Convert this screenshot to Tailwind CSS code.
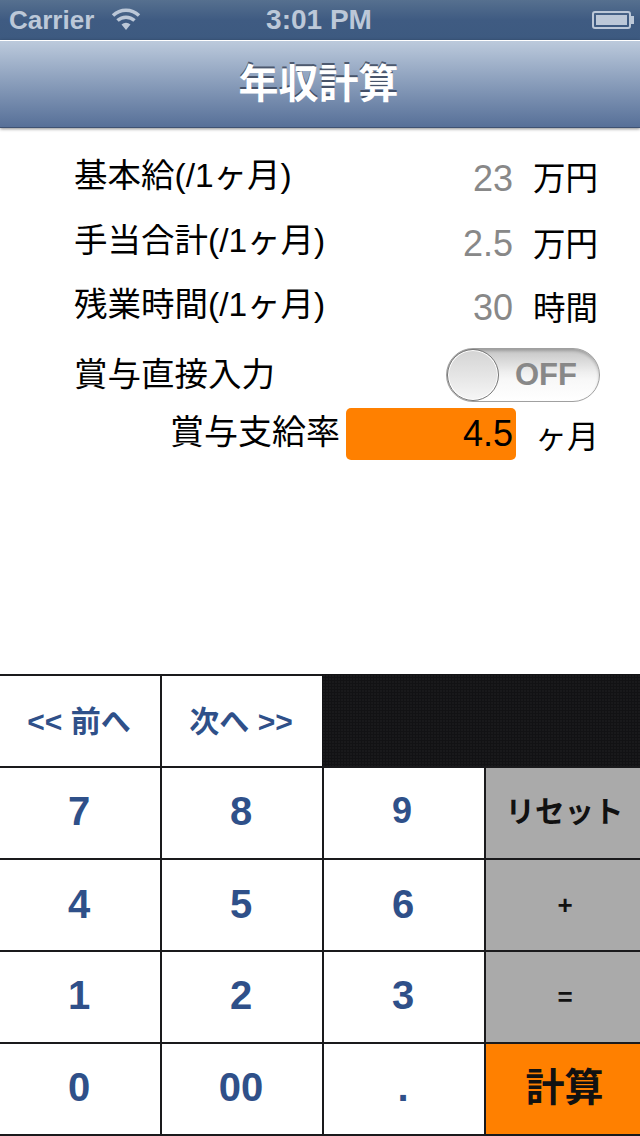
<!DOCTYPE html>
<html lang="ja">

<head>
  <meta charset="UTF-8">
  <meta name="viewport" content="width=device-width, initial-scale=1.0">
  <script src="https://cdn.jsdelivr.net/npm/@tailwindcss/browser@4"></script>
  <title>年収計算</title>
</head>

<body class="bg-white font-['Liberation_Sans','Noto_Sans_CJK_JP',sans-serif]">
  <div class="w-[640px] h-[1136px] flex flex-col overflow-hidden">
    <!-- status bar -->
    <div class="h-[40px] flex items-center px-[9px] bg-gradient-to-b from-[#56708f] via-[#3f5b82] to-[#3d5a80] text-[#bcc8d8] font-bold text-[26px]">
      <div class="w-[100px]">Carrier</div>
      <svg class="mt-[-3px]" width="34" height="24" viewBox="0 0 32 24">
        <path d="M16 23 L11.500 17.500 A7 7 0 0 1 20.500 17.500 Z" fill="#bcc8d8" />
        <path d="M7.500 13.500 A12.500 12.500 0 0 1 24.500 13.500" fill="none" stroke="#bcc8d8" stroke-width="3.500" />
        <path d="M3 8.500 A19 19 0 0 1 29 8.500" fill="none" stroke="#bcc8d8" stroke-width="3.500" />
      </svg>
      <div class="w-[106px] ml-[123px] text-center whitespace-nowrap text-[28px]">3:01 PM</div>
      <div class="ml-auto mr-[-3px] flex items-center">
        <div class="w-[39px] h-[18px] border-2 border-[#bcc8d8] rounded-[3px] p-[2px]">
          <div class="w-full h-full bg-[#bcc8d8]"></div>
        </div>
        <div class="w-[3px] h-[8px] bg-[#bcc8d8]"></div>
      </div>
    </div>
    <!-- nav bar -->
    <div class="h-[88px] border-t-[1px] border-white bg-gradient-to-b from-[#bccadc] to-[#577098] flex items-center justify-center shadow-[0_1px_3px_rgba(0,0,0,0.45)] border-b-[1px] border-b-[#3f5272] z-10">
      <h1 class="text-white font-bold text-[40px] mr-[3px] [text-shadow:0_-2px_0_rgba(40,50,70,0.7)]">年収計算</h1>
    </div>

    <!-- form -->
    <div class="flex-1 text-black text-[33.500px] pt-[25px]">
      <div class="h-[48px] flex items-center pl-[74px]">
        <div class="flex-1 -mt-[2px]">基本給(/1ヶ月)</div>
        <div class="text-[36px] text-[#888] mr-[20px] mt-[4px]">23</div>
        <div class="w-[66px] mr-[41px] mt-[4px] text-[32.500px] whitespace-nowrap">万円</div>
      </div>
      <div class="h-[48px] mt-[17px] flex items-center pl-[74px]">
        <div class="flex-1 -mt-[2px]">手当合計(/1ヶ月)</div>
        <div class="text-[36px] text-[#888] mr-[20px] mt-[4px]">2.5</div>
        <div class="w-[66px] mr-[41px] mt-[6px] text-[32.500px] whitespace-nowrap">万円</div>
      </div>
      <div class="h-[48px] mt-[16px] flex items-center pl-[74px]">
        <div class="flex-1 -mt-[2px]">残業時間(/1ヶ月)</div>
        <div class="text-[36px] text-[#888] mr-[20px] mt-[4px]">30</div>
        <div class="w-[66px] mr-[41px] mt-[6px] text-[32.500px] whitespace-nowrap">時間</div>
      </div>
      <div class="h-[54px] mt-[18px] flex items-center pl-[74px]">
        <div class="flex-1">賞与直接入力</div>
        <!-- switch -->
        <div class="relative w-[154px] h-[54px] mr-[40px] rounded-full border border-[#a0a0a0] bg-[linear-gradient(to_bottom,#c4c4c4,#efefef_45%,#f8f8f8_60%,#ffffff)] flex items-center justify-end pr-[22px] shadow-[inset_0_2px_3px_rgba(0,0,0,0.2)]">
          <span class="text-[#888] font-bold text-[31px]">OFF</span>
          <div class="absolute left-0 top-0 w-[52px] h-[52px] rounded-full border border-[#777] bg-gradient-to-b from-[#d4d4d4] to-[#f6f6f6] shadow-[inset_0_0_0_1px_#fff]"></div>
        </div>
      </div>
      <div class="h-[52px] mt-[6px] flex items-center">
        <div class="w-[340px] text-right whitespace-nowrap -mt-[4px] text-[34px]">賞与支給率</div>
        <div class="w-[170px] h-[52px] ml-[6px] bg-[#ff8000] rounded-[5px] flex items-center justify-end pr-[3px] text-[36px]">4.5</div>
        <div class="ml-[19px] mt-[6px] text-[32px] whitespace-nowrap">ヶ月</div>
      </div>
    </div>

    <!-- keypad -->
    <div class="grid grid-cols-[160px_160px_160px_154px] grid-rows-[90px_90px_90px_90px_90px] gap-[2px] py-[2px] bg-[#1a1a1c] text-[#2f5089] font-bold text-[40px]">
      <div class="bg-white flex items-center justify-center text-[30px] pr-[2px]">&lt;&lt; 前へ</div>
      <div class="bg-white flex items-center justify-center text-[30px] pr-[2px]">次へ &gt;&gt;</div>
      <div class="col-span-2 ml-[-2px] mt-[-2px] bg-[#19191b] bg-[linear-gradient(to_right,#121214_1px,transparent_1px),linear-gradient(to_bottom,#121214_1px,transparent_1px)] bg-[size:3px_3px]"></div>

      <div class="bg-white flex items-center justify-center pb-[4px] pr-[2px]">7</div>
      <div class="bg-white flex items-center justify-center pb-[4px] pr-[2px]">8</div>
      <div class="bg-white flex items-center justify-center pb-[4px] pr-[4px] text-[36px]">9</div>
      <div class="bg-[#aaa] flex items-center justify-center text-[#111] text-[29.500px] pb-[2px] pl-[3px]">リセット</div>

      <div class="bg-white flex items-center justify-center pb-[2px] pr-[2px]">4</div>
      <div class="bg-white flex items-center justify-center pb-[2px] pr-[2px]">5</div>
      <div class="bg-white flex items-center justify-center pb-[2px] pr-[2px]">6</div>
      <div class="bg-[#aaa] flex items-center justify-center text-[#111] text-[26px] pl-[4px]">+</div>

      <div class="bg-white flex items-center justify-center pb-[4px] pr-[2px]">1</div>
      <div class="bg-white flex items-center justify-center pb-[4px] pr-[2px]">2</div>
      <div class="bg-white flex items-center justify-center pb-[4px] pr-[2px]">3</div>
      <div class="bg-[#aaa] flex items-center justify-center text-[#111] text-[26px] pl-[4px]">=</div>

      <div class="bg-white flex items-center justify-center pb-[4px] pr-[2px]">0</div>
      <div class="bg-white flex items-center justify-center pb-[4px] pr-[2px]">00</div>
      <div class="bg-white flex items-center justify-center pb-[4px] pr-[2px]">.</div>
      <div class="bg-[#ff8000] flex items-center justify-center text-[#111] text-[39px] pb-[2px] pl-[3px]">計算</div>
    </div>
  </div>
</body>

</html>
